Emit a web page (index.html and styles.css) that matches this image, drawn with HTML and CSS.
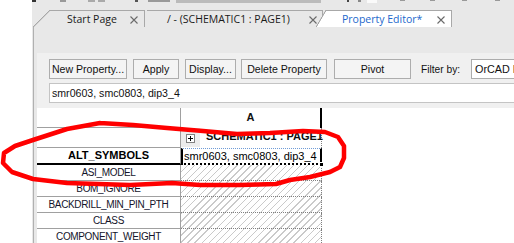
FILE: index.html
```html
<!DOCTYPE html>
<html>
<head>
    <title>Property Editor</title>
    <link rel="stylesheet" href="styles.css">
</head>
<body>

    <div class="app">
        <div class="gutter"></div>
        <div class="main">
            <div class="strip"></div>

            <div class="tabbar">
                <div class="tab tab-start">
                    <span class="tab-label">Start Page</span>
                    <svg class="tab-close" width="8" height="8" viewBox="0 0 8 8"><path d="M0.5 0.5 L7.5 7.5 M7.5 0.5 L0.5 7.5"/></svg>
                </div>
                <div class="tab tab-page">
                    <span class="tab-label">/ - (SCHEMATIC1 : PAGE1)</span>
                    <svg class="tab-close" width="8" height="8" viewBox="0 0 8 8"><path d="M0.5 0.5 L7.5 7.5 M7.5 0.5 L0.5 7.5"/></svg>
                </div>
                <div class="tab tab-active">
                    <span class="tab-label">Property Editor*</span>
                    <svg class="tab-close" width="8" height="8" viewBox="0 0 8 8"><path d="M0.5 0.5 L7.5 7.5 M7.5 0.5 L0.5 7.5"/></svg>
                </div>
            </div>

            <div class="panel">
                <div class="panel-gap"></div>
                <div class="editor">
                    <div class="toolbar">
                        <button type="button" class="btn btn-new">New Property...</button>
                        <button type="button" class="btn btn-apply">Apply</button>
                        <button type="button" class="btn btn-display">Display...</button>
                        <button type="button" class="btn btn-delete">Delete Property</button>
                        <button type="button" class="btn btn-pivot">Pivot</button>
                        <span class="filter-label">Filter by:</span>
                        <div class="combo">OrCAD PCB Designer</div>
                    </div>

                    <div class="value-box">smr0603, smc0803, dip3_4</div>

                    <div class="grid">
                        <div class="row row-head">
                            <div class="rh"></div>
                            <div class="cell col-head">A</div>
                        </div>
                        <div class="row row-group">
                            <div class="rh"></div>
                            <div class="cell group-cell">
                                <span class="expander">
                                    <svg width="9" height="9" viewBox="0 0 9 9"><rect x="0.5" y="0.5" width="8" height="8" fill="#fff" stroke="#808080"/><path d="M2 4.5 H7 M4.5 2 V7" stroke="#000"/></svg>
                                </span>
                                <span class="group-title">SCHEMATIC1 : PAGE1</span>
                            </div>
                        </div>
                        <div class="row row-selected">
                            <div class="rh rh-bold">ALT_SYMBOLS</div>
                            <div class="cell cell-selected">smr0603, smc0803, dip3_4<span class="handle"></span></div>
                        </div>
                        <div class="row">
                            <div class="rh">ASI_MODEL</div>
                            <div class="cell cell-empty"></div>
                        </div>
                        <div class="row">
                            <div class="rh">BOM_IGNORE</div>
                            <div class="cell cell-empty"></div>
                        </div>
                        <div class="row">
                            <div class="rh">BACKDRILL_MIN_PIN_PTH</div>
                            <div class="cell cell-empty"></div>
                        </div>
                        <div class="row">
                            <div class="rh">CLASS</div>
                            <div class="cell cell-empty"></div>
                        </div>
                        <div class="row">
                            <div class="rh">COMPONENT_WEIGHT</div>
                            <div class="cell cell-empty"></div>
                        </div>
                    </div>
                </div>
            </div>
        </div>
    </div>

    <!-- hand drawn highlight on top of the screenshot -->
    <svg class="annotation" width="514" height="243" viewBox="0 0 514 243">
        <polyline points="100,123 133,125 167,128 203,131 237,134 270,133 303,131 325,132 338,137 344,146 344,158 340,167 330,172 310,177 290,180 276,184 240,185 200,185 172,183 130,185 67,183 33,179 12,172 3,163 4,153 15,146 33,140 67,129 100,123"/>
    </svg>

</body>
</html>
```

FILE: styles.css
```css
* {
    box-sizing: border-box;
}

body {
    margin: 0;
    position: relative;
    width: 514px;
    height: 243px;
    overflow: hidden;
    background: white;
    font-family: "Liberation Sans", Arial, sans-serif;
    color: #111;
}

.app {
    display: flex;
    width: 514px;
    height: 243px;
}

.gutter {
    width: 32px;
    flex-shrink: 0;
    background: white;
}

.main {
    flex: 1;
    display: flex;
    flex-direction: column;
    background: #e8e8e8;
    min-width: 0;
}

/* bottom edge of the toolbar icons that got cut off */
.strip {
    height: 3px;
    background:
        linear-gradient(#333, #333) 0 0 / 4px 2px no-repeat,
        linear-gradient(#999, #999) 28px 0 / 6px 2px no-repeat,
        linear-gradient(#aaa, #aaa) 56px 0 / 7px 2px no-repeat,
        linear-gradient(#aaa, #aaa) 66px 0 / 7px 2px no-repeat,
        linear-gradient(#555, #555) 103px 0 / 3px 2px no-repeat,
        linear-gradient(#999, #999) 116px 0 / 22px 2px no-repeat,
        linear-gradient(#bbb, #bbb) 144px 0 / 145px 3px no-repeat,
        linear-gradient(#444, #444) 315px 0 / 2px 2px no-repeat,
        linear-gradient(#888, #888) 326px 0 / 3px 2px no-repeat,
        linear-gradient(#fafafa, #fafafa) 335px 0 / 10px 3px no-repeat,
        linear-gradient(#999, #999) 368px 0 / 5px 1px no-repeat,
        linear-gradient(#999, #999) 398px 0 / 5px 1px no-repeat,
        linear-gradient(#999, #999) 430px 0 / 5px 1px no-repeat,
        linear-gradient(#999, #999) 463px 0 / 5px 1px no-repeat,
        #e8e8e8;
}

.tabbar {
    height: 24px;
    display: flex;
    align-items: flex-end;
    padding-left: 1px;
}

.tab {
    position: relative;
    height: 17px;
    display: flex;
    align-items: center;
    border-top: 1px solid #a8a8a8;
    border-right: 1px solid #a8a8a8;
    background: #e8e8e8;
    font-family: "Open Sans", sans-serif;
    font-size: 10.5px;
    color: #1a1a1a;
    white-space: nowrap;
}

.tab::before {
    content: "";
    position: absolute;
    top: -1px;
    bottom: 0;
    left: -17px;
    width: 17px;
    background: linear-gradient(to bottom right, transparent calc(50% - 0.6px), #a8a8a8 calc(50% - 0.1px), #a8a8a8 calc(50% + 0.4px), #e8e8e8 calc(50% + 0.9px));
}

.tab-start {
    margin-left: 17px;
    width: 95px;
    padding: 0 6px 0 17px;
    z-index: 2;
}

.tab-page {
    margin-left: 2px;
    width: 176px;
    padding: 0 5px 0 20px;
    z-index: 1;
}

.tab-page::before {
    display: none;
}

.tab-active {
    margin-left: 3px;
    width: 126px;
    padding: 0 6px 0 16px;
    background: white;
    color: #1c68cc;
    z-index: 3;
}

.tab-active::before {
    left: -10px;
    width: 10px;
    background: linear-gradient(to bottom right, transparent calc(50% - 0.6px), #a8a8a8 calc(50% - 0.1px), #a8a8a8 calc(50% + 0.4px), white calc(50% + 0.9px));
}

.tab-close {
    margin-left: auto;
    margin-top: 1px;
}

.tab-close path {
    stroke: #6a6a6a;
    stroke-width: 1.1;
}

.panel {
    flex: 1;
    display: flex;
    flex-direction: column;
    margin-left: 1px;
    border-left: 1px solid #b0b0b0;
    padding-left: 3px;
    min-height: 0;
}

.panel-gap {
    height: 26px;
    flex-shrink: 0;
}

.editor {
    flex: 1;
    display: flex;
    flex-direction: column;
    background: #f0f0f0;
    min-height: 0;
}

.toolbar {
    display: flex;
    align-items: center;
    padding: 6px 0 0 12px;
    height: 26px;
    white-space: nowrap;
}

.btn {
    height: 20px;
    margin: 0 6px 0 0;
    padding: 0;
    border: 1px solid #adadad;
    background: #f4f4f4;
    font-family: "Liberation Sans", Arial, sans-serif;
    font-size: 10.6px;
    color: #111;
    flex-shrink: 0;
}

.btn-new { width: 78px; }
.btn-apply { width: 46px; }
.btn-display { width: 51px; margin-right: 5px; }
.btn-delete { width: 86px; margin-right: 7px; }
.btn-pivot { width: 77px; margin-right: 10px; }

.filter-label {
    font-size: 10.2px;
    width: 50px;
    flex-shrink: 0;
}

.combo {
    height: 20px;
    flex: 1;
    border: 1px solid #acacac;
    border-right: none;
    background: white;
    font-size: 10.8px;
    line-height: 18px;
    padding-left: 3px;
    overflow: hidden;
}

.value-box {
    height: 20px;
    margin: 4px 0 0 12px;
    border: 1px solid #c4c4c4;
    border-right: none;
    background: white;
    font-size: 10.6px;
    line-height: 18px;
    padding-left: 2px;
    flex-shrink: 0;
}

.grid {
    flex: 1;
    margin-top: 5px;
    background: white;
    display: flex;
    flex-direction: column;
}

.row {
    display: flex;
    height: 16px;
    flex-shrink: 0;
}

.rh {
    width: 144px;
    flex-shrink: 0;
    border-right: 1px solid #a0a0a0;
    border-bottom: 1px solid #a0a0a0;
    font-size: 10px;
    letter-spacing: -0.35px;
    text-align: center;
    line-height: 15px;
    white-space: nowrap;
    color: #14142a;
}

.cell {
    width: 141px;
    flex-shrink: 0;
    white-space: nowrap;
}

.row-head {
    height: 20px;
}

.col-head {
    border-right: 2px solid #000;
    font-weight: bold;
    font-size: 11px;
    text-align: center;
    line-height: 19px;
}

.row-group {
    height: 20px;
}

.group-cell {
    display: flex;
    align-items: flex-start;
    border-right: 1px dotted #808080;
}

.expander {
    width: 19px;
    height: 19px;
    background: #ececec;
    display: flex;
    align-items: center;
    justify-content: center;
    padding-top: 2px;
    flex-shrink: 0;
}

.expander svg {
    display: block;
}

.group-title {
    margin-left: 6px;
    margin-top: 2px;
    font-weight: bold;
    font-size: 11px;
}

.row-selected {
    height: 17px;
}

.rh-bold {
    border-bottom: 2px solid #000;
    font-weight: bold;
    font-size: 11px;
    letter-spacing: 0;
    color: #000;
}

.cell-selected {
    position: relative;
    border-top: 1px dotted #6f9bd6;
    border-left: 2px solid #000;
    border-right: 2px solid #000;
    border-bottom: 2px dotted #000;
    font-size: 11px;
    line-height: 14px;
    padding-left: 1px;
    color: #000;
}

.handle {
    position: absolute;
    right: -4px;
    bottom: -4px;
    width: 5px;
    height: 5px;
    background: #000;
    border: 1px solid white;
}

.cell-empty {
    border-right: 1px dotted #808080;
    border-bottom: 1px dotted #808080;
    background: repeating-linear-gradient(135deg, #fff 0 4px, #cacaca 4px 5px);
    background-attachment: fixed;
}

.annotation {
    position: absolute;
    top: 0;
    left: 0;
    pointer-events: none;
}

.annotation polyline {
    fill: none;
    stroke: #ff0000;
    stroke-width: 4.5;
    stroke-linejoin: round;
    stroke-linecap: round;
}
```
